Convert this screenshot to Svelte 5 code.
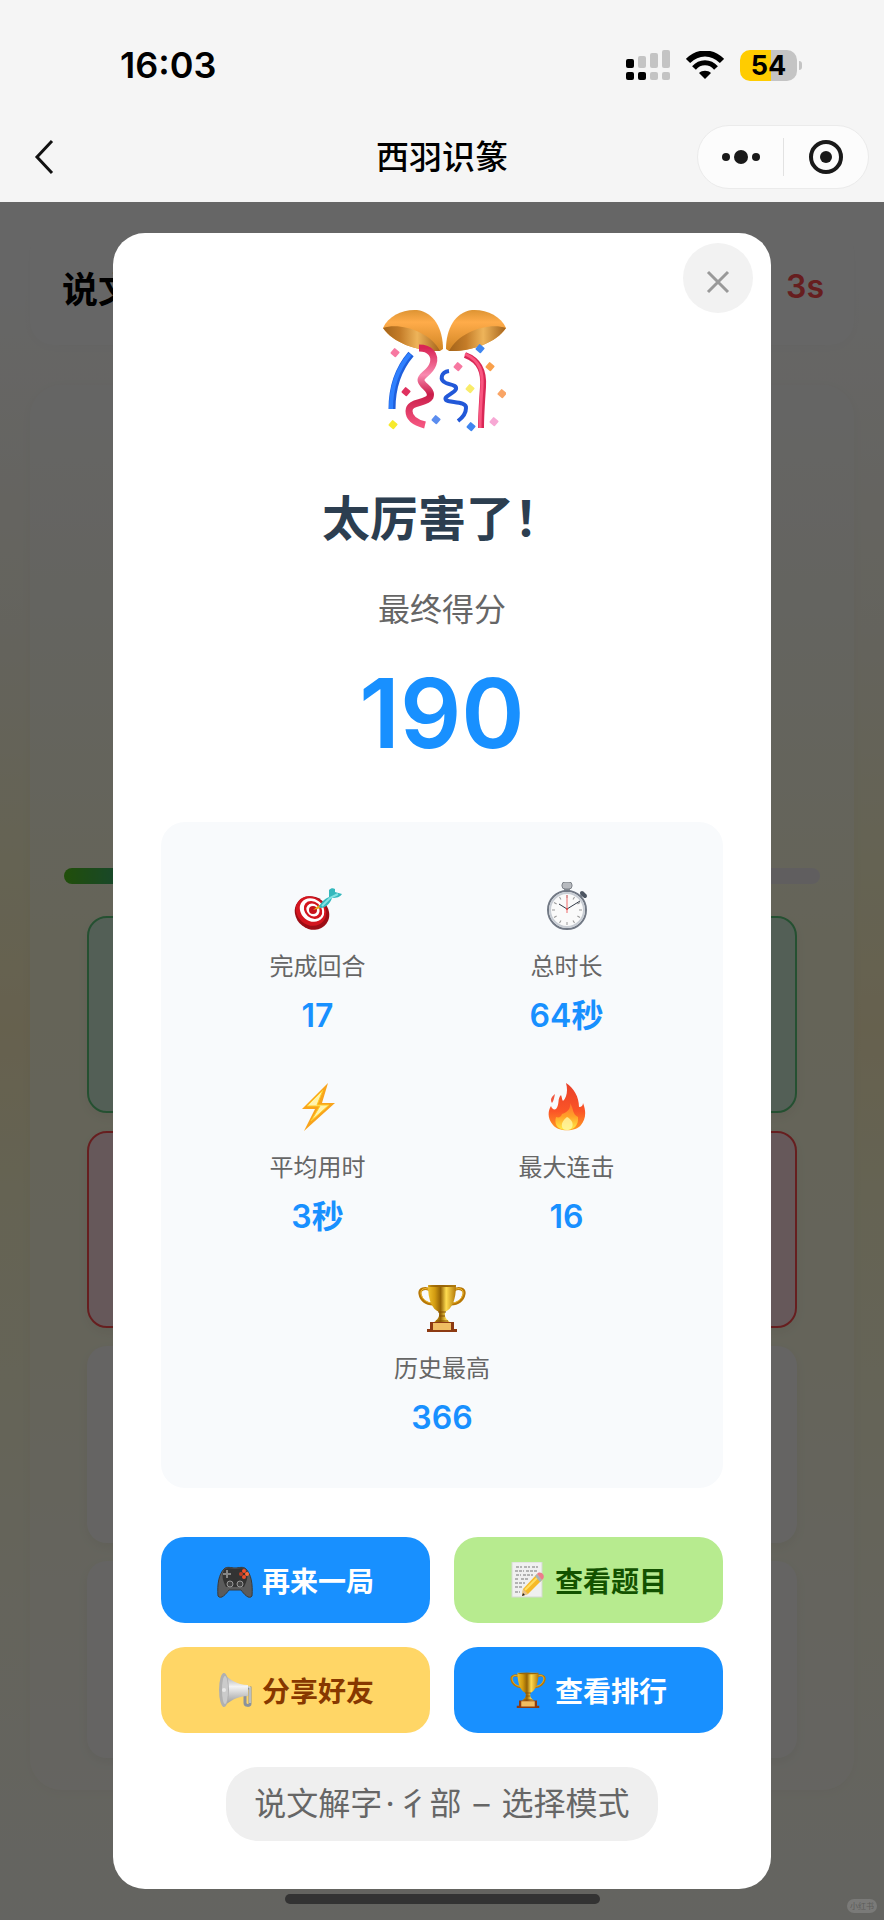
<script>
  const stats = [
    { icon: target, label: '完成回合', value: '17' },
    { icon: stopwatch, label: '总时长', value: '64秒' },
    { icon: bolt, label: '平均用时', value: '3秒' },
    { icon: fire, label: '最大连击', value: '16' },
    { icon: trophy, label: '历史最高', value: '366' }
  ]

  const actions = [
    { icon: gamepad, label: '再来一局', kind: 'blue' },
    { icon: memo, label: '查看题目', kind: 'green' },
    { icon: megaphone, label: '分享好友', kind: 'yellow' },
    { icon: trophy, label: '查看排行', kind: 'blue' }
  ]

  const confetti = [
    [12, 43, '#f778a1'], [23, 82, '#e0315f'], [10, 115, '#f7ea2c'], [53, 110, '#5b8def'],
    [75, 57, '#f778a1'], [87, 79, '#f9ec6a'], [97, 39, '#3f86f0'], [107, 57, '#f9a04b'],
    [119, 84, '#f9a566'], [88, 117, '#3f86f0'], [111, 112, '#f7a8d4']
  ]

  const ticks = [0, 30, 60, 90, 120, 150, 180, 210, 240, 270, 300, 330]
</script>

{#snippet party()}
  <svg class="party" viewBox="-5 0 128 128" aria-hidden="true">
    <path d="M0 19C5 7 20 0 34 1C51 3 60 20 60 40L57 42C34 42 10 34 0 19Z" fill="url(#shell)" />
    <path d="M0 19C16 13 47 22 57 42C36 43 10 34 0 19Z" fill="url(#shell-in)" />
    <path d="M123 19C118 7 103 0 89 1C72 3 63 20 63 40L66 42C89 42 113 34 123 19Z" fill="url(#shell)" />
    <path d="M123 19C107 13 76 22 66 42C87 43 113 34 123 19Z" fill="url(#shell-in)" />
    <path d="M28 45C16 59 9 77 9 100" fill="none" stroke="#1f5fdc" stroke-width="7" />
    <path d="M27 45C15 59 8 77 8 100" fill="none" stroke="#2f80ff" stroke-width="4" />
    <path d="M36 39C47 39 53 46 50 55C47 64 38 66 38 71C38 77 50 80 47 88C43 95 26 92 26 102C26 110 34 114 42 116" fill="none" stroke="url(#ribbon)" stroke-width="7" />
    <path d="M66 62C58 63 56 71 63 74C68 76 74 76 73 80C71 85 60 87 63 91C66 94 84 92 83 99C83 104 79 109 75 112" fill="none" stroke="#2258d8" stroke-width="4" />
    <path d="M82 46C98 52 101 64 100 78C99 92 98 106 98 119" fill="none" stroke="#d92856" stroke-width="6" />
    <path d="M82 45C98 52 100 64 99 78C98 92 97 106 97 119" fill="none" stroke="#fa5680" stroke-width="3" />
    {#each confetti as [x, y, color]}
      <rect x={x - 3} y={y - 3} width="7" height="7" rx="1" fill={color} transform="rotate(40 {x} {y})" />
    {/each}
  </svg>
{/snippet}

{#snippet target()}
  <svg viewBox="0 0 48 48" aria-hidden="true">
    <ellipse cx="18" cy="31" rx="18" ry="16" fill="#9c0d15" transform="rotate(38 18 31)" />
    <ellipse cx="17" cy="29" rx="16" ry="14" fill="#d3151f" transform="rotate(40 17 29)" />
    <ellipse cx="18" cy="28" rx="13" ry="11" fill="#fff" transform="rotate(40 18 28)" />
    <ellipse cx="19" cy="28" rx="10" ry="8" fill="#d3151f" transform="rotate(40 19 28)" />
    <ellipse cx="19" cy="28" rx="7" ry="6" fill="#fff" transform="rotate(40 19 28)" />
    <ellipse cx="19" cy="28" rx="4" ry="4" fill="#c5141d" />
    <path d="M19 28L25 23L27 26Z" fill="#e6a817" />
    <path d="M25 25C28 18 33 16 35 15L35 8C37 6 39 6 41 7L41 10L48 12C46 15 43 16 38 16C37 19 34 25 27 26Z" fill="#35b8bd" />
    <path d="M28 24L36 16L44 12" fill="none" stroke="#83e2e2" stroke-width="2" />
  </svg>
{/snippet}

{#snippet stopwatch()}
  <svg viewBox="0 0 48 48" aria-hidden="true">
    <path d="M37 15L40 12" stroke="#8a919c" stroke-width="3" />
    <path d="M39 11L42 14" stroke="#4d5562" stroke-width="4" stroke-linecap="round" />
    <rect x="21" y="4" width="6" height="6" fill="#8b9098" />
    <rect x="19" y="0" width="10" height="7" rx="3" fill="#b7babf" stroke="#7d8188" />
    <circle cx="24" cy="28" r="19" fill="#fafafa" stroke="#717884" stroke-width="2" />
    <circle cx="24" cy="28" r="17" fill="none" stroke="#c8cdd4" stroke-width="2" />
    {#each ticks as angle}
      <path d="M24 13V16" stroke="#999" stroke-width="1" transform="rotate({angle} 24 28)" />
    {/each}
    <path d="M24 27L16 22M24 27L37 19" stroke="#333b48" stroke-width="1" />
    <path d="M24 13V31" stroke="#ef6b6b" stroke-width="1" />
    <circle cx="24" cy="27" r="1" fill="#d44" />
  </svg>
{/snippet}

{#snippet bolt()}
  <svg viewBox="0 0 48 48" aria-hidden="true">
    <path d="M34 0L8 26L21 26L10 48L41 20L28 20Z" fill="#f9a41c" />
    <path d="M29 7L13 23L26 23L17 38L35 22L23 22Z" fill="#fff3ae" stroke="#ffcd25" stroke-width="1" />
  </svg>
{/snippet}

{#snippet fire()}
  <svg viewBox="0 0 48 48" aria-hidden="true">
    <path d="M23 0C31 5 36 14 36 24C39 24 40 22 40 20C44 30 42 37 38 42C33 49 15 49 10 42C4 35 5 28 8 23C9 26 11 27 13 26C17 21 14 16 18 12C19 14 19 17 20 18C24 14 25 7 23 0Z" fill="url(#flame)" />
    <path d="M12 11C8 14 7 17 9 20C11 17 11 15 12 11Z" fill="#f0563e" />
    <path d="M27 20C31 26 29 31 35 34C36 43 30 47 24 47C14 47 11 41 13 34C16 35 18 34 19 31C25 29 28 25 27 20Z" fill="url(#flame-in)" />
    <path d="M24 34C32 38 31 47 24 47C17 47 17 39 24 34Z" fill="#fff8a5" opacity=".8" />
  </svg>
{/snippet}

{#snippet trophy()}
  <svg viewBox="0 0 48 48" aria-hidden="true">
    <path d="M12 6C7 3 1 5 2 10C3 16 8 20 15 20M36 6C41 3 47 5 46 10C45 16 40 20 33 20" fill="none" stroke="#b77705" stroke-width="3" />
    <path d="M12 6C7 3 2 5 3 10C4 15 9 19 14 19M36 6C41 3 46 5 45 10C44 15 39 19 34 19" fill="none" stroke="#f1bd35" stroke-width="1" />
    <path d="M10 1H38C38 16 34 25 27 28V32C28 36 32 37 32 39H16C16 37 20 36 21 32V28C14 25 10 16 10 1Z" fill="url(#gold)" />
    <ellipse cx="24" cy="2" rx="14" ry="1" fill="#9a6507" />
    <path d="M20 28H28M21 32H27M18 37H30" stroke="#855005" stroke-width="1" />
    <path d="M12 38H36V45H39V48H9V45H12Z" fill="#8d3a12" />
    <rect x="15" y="39" width="18" height="7" fill="#f0bd62" />
  </svg>
{/snippet}

{#snippet gamepad()}
  <svg viewBox="0 0 36 36" aria-hidden="true">
    <path d="M7 7C10 4 14 6 18 6C22 6 26 4 29 7C34 12 36 22 35 34C32 38 27 32 24 28H12C9 32 4 38 1 34C0 22 2 12 7 7Z" fill="#5b5b5b" stroke="#3a3a3a" />
    <path d="M7 8C11 5 14 7 18 7C22 7 25 5 29 8C32 13 30 19 27 25H9C6 19 4 13 7 8Z" fill="#333" />
    <path d="M10 8V16M6 12H14" stroke="#858585" stroke-width="2" />
    <circle cx="13" cy="22" r="3" fill="#444" stroke="#999" />
    <circle cx="23" cy="22" r="3" fill="#444" stroke="#999" />
    <circle cx="27" cy="9" r="2" fill="#f4512c" /><circle cx="27" cy="15" r="2" fill="#e84e2c" />
    <circle cx="24" cy="12" r="2" fill="#bd3e25" /><circle cx="30" cy="12" r="2" fill="#ff6a39" />
  </svg>
{/snippet}

{#snippet memo()}
  <svg viewBox="0 0 36 36" aria-hidden="true">
    <rect x="2" y="0" width="30" height="35" fill="#f0f0f0" stroke="#d5dad2" />
    <path d="M6 5H12M14 5H20M22 5H28M5 9H14M16 9H28M6 13H11M13 13H23M5 17H9M11 17H19M5 21H15M5 25H12M5 30H10" stroke="#777" stroke-width="1" stroke-dasharray="3 1" />
    <path d="M12 34L13 27L27 12L32 18L18 32Z" fill="#f6b928" />
    <path d="M15 28L29 14" stroke="#ffdf63" stroke-width="2" />
    <path d="M12 34L13 27L18 32Z" fill="#e6c28b" />
    <path d="M12 34L13 31L15 33Z" fill="#222" />
    <path d="M25 14L27 12L32 18L30 20Z" fill="#a4b4bc" />
    <path d="M27 12C30 8 36 13 33 17L32 18Z" fill="#ed7c8c" />
  </svg>
{/snippet}

{#snippet megaphone()}
  <svg viewBox="0 0 36 36" aria-hidden="true">
    <path d="M25 16H33V32C33 34 28 34 28 31V24" fill="none" stroke="#8b929b" stroke-width="3" />
    <path d="M29 15H33V31" fill="none" stroke="#e8ebee" stroke-width="1" />
    <path d="M6 1C12 7 20 13 31 13V24C20 24 13 29 6 35Z" fill="url(#horn)" />
    <ellipse cx="7" cy="18" rx="5" ry="17" fill="#b0b0b0" />
    <ellipse cx="8" cy="18" rx="3" ry="14" fill="#cbcbcb" />
    <circle cx="7" cy="18" r="2" fill="#e9e9e9" />
  </svg>
{/snippet}

<svg class="defs" aria-hidden="true">
  <defs>
    <linearGradient id="shell" x1="0" x2="0" y1="0" y2="1">
      <stop offset="0" stop-color="#dd9433" /><stop offset=".3" stop-color="#ffac4a" /><stop offset="1" stop-color="#d08423" />
    </linearGradient>
    <linearGradient id="shell-in">
      <stop offset="0" stop-color="#a4641a" /><stop offset=".3" stop-color="#c47c28" /><stop offset=".6" stop-color="#eeb45a" /><stop offset="1" stop-color="#a5631b" />
    </linearGradient>
    <linearGradient id="ribbon" x1="0" x2="0" y1="0" y2="1">
      <stop offset="0" stop-color="#d92455" /><stop offset=".35" stop-color="#f98ab0" /><stop offset=".6" stop-color="#c91d49" /><stop offset="1" stop-color="#f4547f" />
    </linearGradient>
    <linearGradient id="gold">
      <stop offset="0" stop-color="#f1c22c" /><stop offset=".25" stop-color="#d19a10" /><stop offset=".45" stop-color="#936206" /><stop offset=".65" stop-color="#ffdc50" /><stop offset="1" stop-color="#b27808" />
    </linearGradient>
    <linearGradient id="flame" x1="0" x2="0" y1="0" y2="1">
      <stop offset="0" stop-color="#e8402a" /><stop offset=".6" stop-color="#fb5527" /><stop offset="1" stop-color="#ff9d22" />
    </linearGradient>
    <linearGradient id="flame-in" x1="0" x2="0" y1="0" y2="1">
      <stop offset="0" stop-color="#ff6f30" /><stop offset=".5" stop-color="#ffa228" /><stop offset="1" stop-color="#ffee47" />
    </linearGradient>
    <linearGradient id="horn" x1="0" x2="0" y1="0" y2="1">
      <stop offset="0" stop-color="#999" /><stop offset=".4" stop-color="#f4f4f4" /><stop offset="1" stop-color="#8b8b8b" />
    </linearGradient>
  </defs>
</svg>

<div class="screen">
  <header>
    <div class="status">
      <span class="time">16:03</span>
      <div class="indicators">
        <svg width="44" height="30" viewBox="0 0 44 30" aria-hidden="true">
          <rect x="0" y="9" width="8" height="9" rx="2" />
          <g fill="#c4c4c4">
            <rect x="12" y="6" width="8" height="12" rx="2" /><rect x="24" y="3" width="8" height="15" rx="2" /><rect x="36" y="0" width="8" height="18" rx="2" />
            <rect x="24" y="22" width="8" height="8" rx="2" /><rect x="36" y="22" width="8" height="8" rx="2" />
          </g>
          <rect x="0" y="22" width="8" height="8" rx="2" /><rect x="12" y="22" width="8" height="8" rx="2" />
        </svg>
        <svg width="38" height="28" viewBox="0 0 38 28" aria-hidden="true">
          <path d="M2 10C12 0 26 0 36 10" fill="none" stroke="#000" stroke-width="6" />
          <path d="M8 17C14 10 24 10 30 17" fill="none" stroke="#000" stroke-width="5" />
          <path d="M13 22C16 19 22 19 25 22L19 28Z" />
        </svg>
        <span class="battery">54</span>
      </div>
    </div>
    <nav>
      <button class="back" aria-label="返回">
        <svg width="20" height="36" viewBox="0 0 20 36"><path d="M18 2L3 18L18 34" fill="none" stroke="#111" stroke-width="3" /></svg>
      </button>
      <h1>西羽识篆</h1>
      <div class="capsule">
        <button aria-label="更多">
          <svg width="38" height="14" viewBox="0 0 38 14" fill="#191919"><circle cx="4" cy="7" r="4" /><circle cx="19" cy="7" r="7" /><circle cx="34" cy="7" r="4" /></svg>
        </button>
        <button aria-label="关闭小程序">
          <svg width="36" height="36" viewBox="0 0 36 36"><circle cx="18" cy="18" r="15" fill="none" stroke="#191919" stroke-width="4" /><circle cx="18" cy="18" r="6" fill="#191919" /></svg>
        </button>
      </div>
    </nav>
  </header>

  <main>
    <div class="game" inert>
      <div class="topic">
        <strong>说文</strong>
        <span>3s</span>
      </div>
      <div class="board">
        <div class="progress"></div>
        <div class="option right"></div>
        <div class="option wrong"></div>
        <div class="option"></div>
        <div class="option"></div>
      </div>
    </div>

    <div class="overlay">
      <section class="modal" role="dialog" aria-labelledby="result-title">
        <button class="close" aria-label="关闭">
          <svg width="24" height="24" viewBox="0 0 24 24"><path d="M2 2L22 22M22 2L2 22" stroke="#999" stroke-width="3" /></svg>
        </button>
        {@render party()}
        <h2 id="result-title">太厉害了！</h2>
        <p class="caption">最终得分</p>
        <p class="score">190</p>

        <ul class="stats">
          {#each stats as stat}
            <li>
              {@render stat.icon()}
              <span class="label">{stat.label}</span>
              <span class="value">{stat.value}</span>
            </li>
          {/each}
        </ul>

        <div class="actions">
          {#each actions as action}
            <button class={action.kind}>
              {@render action.icon()}
              {action.label}
            </button>
          {/each}
        </div>

        <p class="tag">说文解字<span>·</span>彳部 <span>–</span> 选择模式</p>
      </section>
      <div class="home"></div>
      <span class="mark">小红书</span>
    </div>
  </main>
</div>

<style>
  :global(body) {
    margin: 0;
  }

  .screen {
    display: flex;
    flex-direction: column;
    min-height: 100vh;
    font-family: Inter, "Noto Sans CJK SC", sans-serif;
    color: #000;
  }

  .defs {
    position: absolute;
    width: 0;
    height: 0;
  }

  svg {
    display: block;
    flex: none;
  }

  h1, h2, p, ul {
    margin: 0;
    padding: 0;
  }

  button {
    display: flex;
    align-items: center;
    justify-content: center;
    border: 0;
    padding: 0;
    background: none;
    font: inherit;
    cursor: pointer;
  }

  header {
    background: #f5f5f5;
  }

  .status {
    display: flex;
    align-items: center;
    justify-content: space-between;
    height: 94px;
    padding: 18px 87px 0 120px;
  }

  .time {
    font-size: 36px;
    font-weight: 600;
  }

  .indicators {
    display: flex;
    align-items: center;
    gap: 16px;
  }

  .battery {
    position: relative;
    width: 57px;
    border-radius: 10px;
    background: linear-gradient(90deg, #ffcc00 54%, #c4c4c4 54%);
    font-size: 27px;
    font-weight: 700;
    line-height: 31px;
    text-align: center;
  }

  .battery::after {
    content: "";
    position: absolute;
    top: 11px;
    right: -5px;
    width: 3px;
    height: 9px;
    border-radius: 0 3px 3px 0;
    background: #c4c4c4;
  }

  nav {
    display: grid;
    grid-template-columns: 1fr auto 1fr;
    align-items: center;
    height: 90px;
    padding: 0 15px;
  }

  .back {
    justify-self: start;
    margin-left: 19px;
  }

  h1 {
    font-size: 33px;
    font-weight: 500;
    line-height: 48px;
  }

  .capsule {
    display: flex;
    justify-self: end;
    width: 172px;
    height: 64px;
    box-sizing: border-box;
    border: 1px solid #ebebeb;
    border-radius: 32px;
    background: #fcfcfc;
  }

  .capsule button {
    flex: 1;
  }

  .capsule button + button {
    position: relative;
  }

  .capsule button + button::before {
    content: "";
    position: absolute;
    left: 0;
    width: 1px;
    height: 38px;
    background: #e2e2e2;
  }

  main {
    display: grid;
    flex: 1;
  }

  .game,
  .overlay {
    grid-area: 1 / 1;
  }

  .game {
    display: flex;
    flex-direction: column;
    padding: 26px 30px 130px;
    background: linear-gradient(#fff 5%, #fbf8e8 25%, #fcf8d0 38%, #fff2c4 48%, #fcf8d0 58%, #fcfae4 80%, #fbfaf2);
  }

  .topic {
    display: flex;
    align-items: center;
    justify-content: space-between;
    height: 117px;
    padding: 0 30px 0 32px;
    border-radius: 24px;
    background: #fefefe;
    font-size: 36px;
    box-shadow: 0 2px 12px rgba(0, 0, 0, .02);
  }

  .topic span {
    font-size: 32px;
    font-weight: 600;
    color: #ff4d4f;
  }

  .board {
    display: flex;
    flex: 1;
    flex-direction: column;
    justify-content: flex-end;
    gap: 18px;
    margin-top: 40px;
    padding: 0 57px 32px;
    border-radius: 32px;
    background: linear-gradient(#fdfdfb, #fbfaf0 15%, #fcfadc 40%, #fcfae2 70%, #fcfbf2);
    box-shadow: 0 2px 12px rgba(0, 0, 0, .03);
  }

  .progress {
    height: 16px;
    margin: 0 -23px 14px;
    border-radius: 8px;
    background: linear-gradient(90deg, #52c41a, #1890ff 20%, #efecee 50%);
  }

  .option {
    height: 197px;
    box-sizing: border-box;
    border-radius: 20px;
    background: #fcfbf8;
    box-shadow: 0 4px 12px rgba(0, 0, 0, .05);
  }

  .right {
    border: 2px solid #5cc87c;
    background: #cfeed6;
  }

  .wrong {
    border: 2px solid #ff4d4f;
    background: #ffdce0;
  }

  .overlay {
    position: relative;
    padding: 31px 113px;
    background: rgba(0, 0, 0, .6);
  }

  .modal {
    position: relative;
    display: flex;
    flex-direction: column;
    align-items: center;
    padding: 76px 48px 48px;
    border-radius: 32px;
    background: #fff;
  }

  .close {
    position: absolute;
    top: 10px;
    right: 18px;
    width: 70px;
    height: 70px;
    padding-top: 8px;
    border-radius: 50%;
    background: #f2f2f2;
  }

  .party {
    width: 128px;
    height: 128px;
  }

  h2 {
    margin-top: 46px;
    font-size: 48px;
    font-weight: 600;
    line-height: 72px;
    color: #2c3e50;
  }

  .caption {
    margin-top: 31px;
    font-size: 32px;
    line-height: 48px;
    color: #666;
  }

  .score {
    margin-top: 21px;
    font-size: 96px;
    font-weight: 600;
    line-height: 116px;
    color: #1890ff;
  }

  .stats {
    display: flex;
    flex-wrap: wrap;
    justify-content: center;
    gap: 43px 24px;
    align-self: stretch;
    margin-top: 51px;
    padding: 60px 44px 46px;
    border-radius: 24px;
    background: #f8fafc;
    list-style: none;
  }

  .stats li {
    display: flex;
    flex: 0 0 calc(50% - 12px);
    flex-direction: column;
    align-items: center;
  }

  .stats svg {
    width: 48px;
    height: 48px;
  }

  .label {
    margin-top: 19px;
    font-size: 24px;
    line-height: 36px;
    color: #666;
  }

  .value {
    margin-top: 7px;
    font-size: 32px;
    font-weight: 600;
    line-height: 48px;
    color: #1890ff;
  }

  .actions {
    display: grid;
    grid-template-columns: 1fr 1fr;
    gap: 24px;
    align-self: stretch;
    margin-top: 49px;
  }

  .actions button {
    gap: 9px;
    height: 86px;
    border-radius: 24px;
    font-size: 28px;
    font-weight: 600;
  }

  .actions svg {
    width: 36px;
    height: 36px;
  }

  .blue {
    background: #1890ff;
    color: #fff;
  }

  .green {
    background: #b7eb8f;
    color: #135200;
  }

  .yellow {
    background: #ffd666;
    color: #873800;
  }

  .tag {
    margin-top: 34px;
    padding: 13px 28px;
    border-radius: 32px;
    background: #efefef;
    font-size: 32px;
    line-height: 48px;
    color: #666;
  }

  .tag span {
    margin: 0 3px;
  }

  .home {
    position: absolute;
    bottom: 16px;
    left: 50%;
    width: 315px;
    height: 10px;
    margin-left: -157px;
    border-radius: 5px;
    background: #333;
  }

  .mark {
    position: absolute;
    right: 7px;
    bottom: 7px;
    padding: 0 3px;
    border-radius: 7px;
    background: #7a7a78;
    font-size: 8px;
    line-height: 14px;
    color: #5c5c5a;
  }
</style>
